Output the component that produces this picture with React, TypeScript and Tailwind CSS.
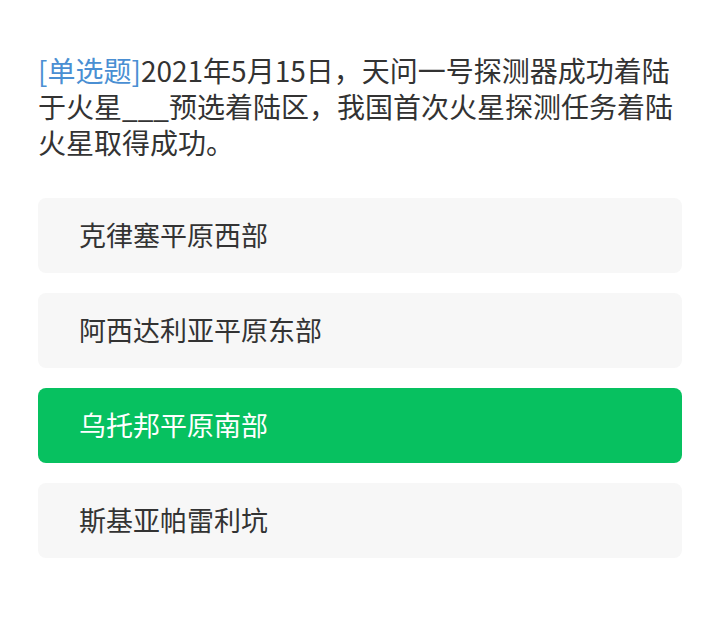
import React from 'react';

const options = ['克律塞平原西部', '阿西达利亚平原东部', '乌托邦平原南部', '斯基亚帕雷利坑'];
const picked = 2;

export default function App() {
  return (
    <div
      className="w-[720px] h-[627px] bg-white px-[38px] pt-[52px]"
      style={{ fontFamily: '"Noto Sans CJK SC", "Noto Sans", sans-serif' }}
    >
      {/* Question */}
      <p className="text-[28px] leading-[36px] text-[#333333]">
        <span className="text-[#4a8fd3]">[单选题]</span>
        2021年5月15日，天问一号探测器成功着陆于火星___预选着陆区，我国首次火星探测任务着陆火星取得成功。
      </p>

      {/* Options */}
      <div className="mt-[38px] flex flex-col gap-[20px]">
        {options.map((opt, i) => (
          <div
            key={opt}
            className={
              i === picked
                ? 'h-[75px] rounded-[8px] bg-[#07c160] text-white flex items-center pl-[41px] text-[27px]'
                : 'h-[75px] rounded-[8px] bg-[#f7f7f7] text-[#333333] flex items-center pl-[41px] text-[27px]'
            }
          >
            {opt}
          </div>
        ))}
      </div>
    </div>
  );
}
